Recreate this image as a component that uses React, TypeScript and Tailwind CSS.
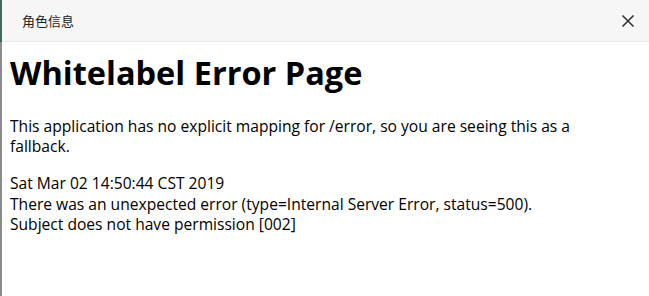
export default function App() {
  return (
    <div className="w-[649px] h-[296px] flex bg-white overflow-hidden">
      <div className="w-[2px] flex flex-col shrink-0">
        <div className="h-[42px] bg-[#3d6b5c]" />
        <div className="flex-1 bg-[#8c8c8c]" />
      </div>
      <div className="flex-1 flex flex-col min-w-0">
        <div className="h-[42px] shrink-0 bg-[#f6f6f6] border-b border-[#ebebeb] flex items-center justify-between pl-[20px] pr-[14px]">
          <span className="text-[13px] text-[#222] font-['Noto_Sans_CJK_SC',sans-serif]">角色信息</span>
          <svg width="14" height="14" viewBox="0 0 14 14" className="text-[#333]">
            <path d="M1.5 1.5 L12.5 12.5 M12.5 1.5 L1.5 12.5" stroke="currentColor" strokeWidth="1.6" />
          </svg>
        </div>
        <div className="px-[8px] text-black font-['Open_Sans',sans-serif]">
          <h1 className="text-[32.5px] font-bold leading-[40px] mt-[11px] mb-[23px]">Whitelabel Error Page</h1>
          <p className="text-[15.6px] leading-[20px] max-w-[590px]">
            This application has no explicit mapping for /error, so you are seeing this as a fallback.
          </p>
          <div className="text-[15.6px] leading-[20.5px] mt-[17px]">
            <div>Sat Mar 02 14:50:44 CST 2019</div>
            <div>There was an unexpected error (type=Internal Server Error, status=500).</div>
            <div>Subject does not have permission [002]</div>
          </div>
        </div>
      </div>
    </div>
  );
}
